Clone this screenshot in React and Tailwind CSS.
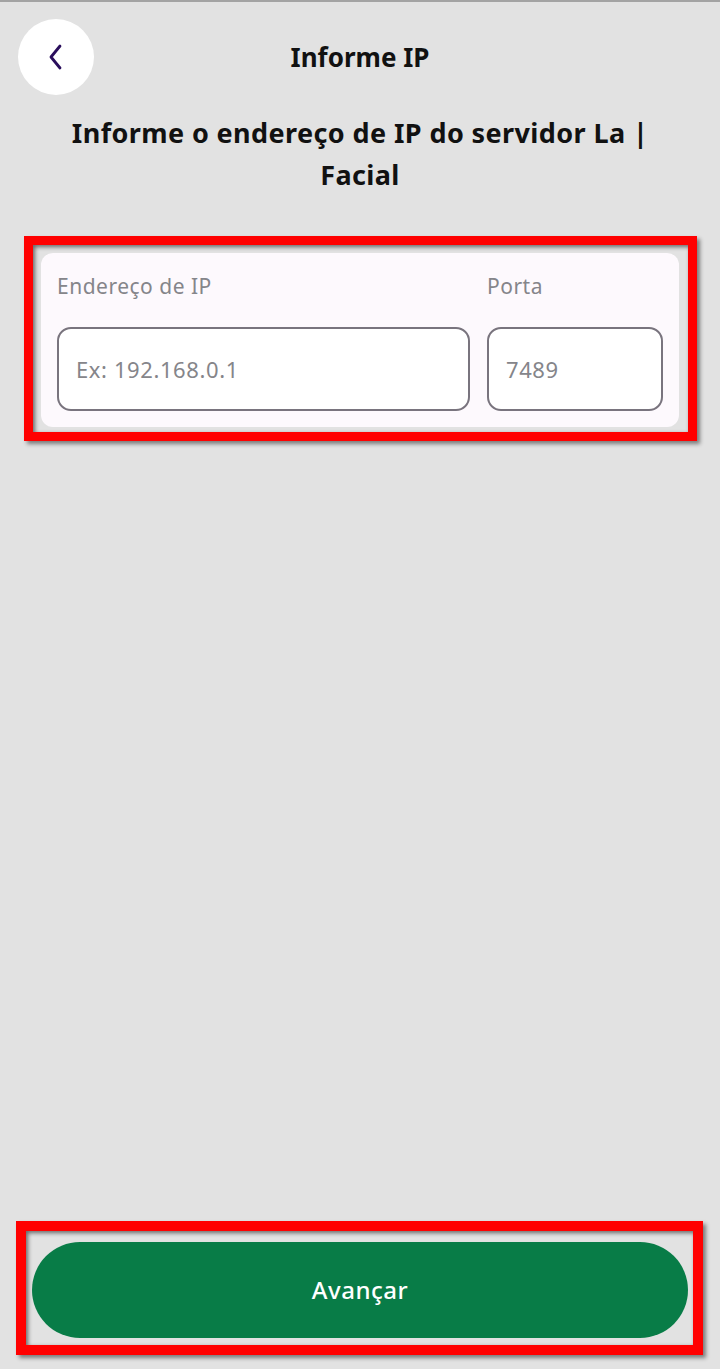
import React from "react";

function RedBox({ className }) {
  return (
    <div
      className={
        "pointer-events-none absolute border-[#ff0000] shadow-[inset_2px_2px_4px_rgba(0,0,0,0.55),3px_3px_4px_rgba(0,0,0,0.45)] " +
        className
      }
    />
  );
}

export default function App() {
  return (
    <div
      className="w-[720px] h-[1369px] bg-[#e2e2e2] border-t-2 border-[#a3a3a3] flex flex-col overflow-hidden"
      style={{ fontFamily: "'Noto Sans', 'Open Sans', sans-serif" }}
    >
      {/* Header */}
      <div className="grid grid-cols-[76px_1fr_76px] items-center px-[18px] mt-[17px]">
        <button className="w-[76px] h-[76px] rounded-full bg-white flex items-center justify-center">
          <svg width="16" height="26" viewBox="0 0 16 26" fill="none">
            <path d="M12 2 L3 13 L12 24" stroke="#2a0e5c" strokeWidth="2.8" strokeLinecap="round" strokeLinejoin="round" />
          </svg>
        </button>
        <h1 className="text-center text-[26px] font-bold text-[#111111]">Informe IP</h1>
        <div />
      </div>

      {/* Subtitle */}
      <p className="mt-[17px] px-[60px] text-center text-[27px] tracking-[0.4px] leading-[42px] font-bold text-[#111111]">
        Informe o endereço de IP do servidor La | Facial
      </p>

      {/* Card */}
      <div className="relative mx-[41px] mt-[57px]">
        <div className="rounded-[12px] bg-[#fdf9fd] p-4 flex gap-[17px]">
          <div className="flex-1 flex flex-col">
            <span className="h-[34px] leading-[34px] text-[21px] tracking-[0.5px] text-[#85858a]">Endereço de IP</span>
            <div className="mt-[24px] h-[84px] rounded-[14px] border-2 border-[#79747e] bg-white flex items-center pl-[17px] text-[22px] tracking-[0.6px] text-[#85858a]">
              Ex: 192.168.0.1
            </div>
          </div>
          <div className="w-[176px] flex flex-col">
            <span className="h-[34px] leading-[34px] text-[21px] tracking-[0.5px] text-[#85858a]">Porta</span>
            <div className="mt-[24px] h-[84px] rounded-[14px] border-2 border-[#79747e] bg-white flex items-center pl-[17px] text-[22px] tracking-[0.6px] text-[#85858a]">
              7489
            </div>
          </div>
        </div>
        <RedBox className="border-[9px] -left-[17px] -top-[17px] -right-[18px] -bottom-[14px]" />
      </div>

      <div className="flex-1" />

      {/* Button */}
      <div className="relative mx-[32px] mb-[31px]">
        <button className="w-full h-[96px] rounded-full bg-[#087c47] text-white text-[24px] tracking-[0.5px] font-medium">
          Avançar
        </button>
        <RedBox className="border-[10px] -left-[16px] -top-[21px] -right-[15px] -bottom-[17px]" />
      </div>
    </div>
  );
}
